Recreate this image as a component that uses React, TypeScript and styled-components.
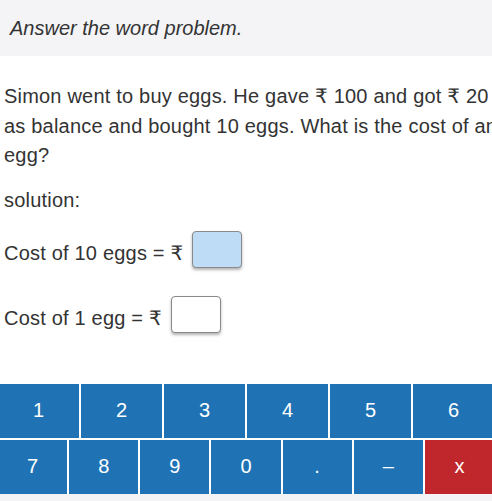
import React from "react";
import styled, { createGlobalStyle } from "styled-components";

const Global = createGlobalStyle`
  html, body { margin: 0; padding: 0; background: #fff; overflow: hidden; }
  body { font-family: "Liberation Sans", Arial, "DejaVu Sans", sans-serif; color: #333; }
`;

const Page = styled.div`
  width: 492px;
  height: 501px;
  overflow: hidden;
  display: flex;
  flex-direction: column;
`;

const Header = styled.div`
  height: 56px;
  flex: none;
  display: flex;
  align-items: center;
  padding-left: 10px;
  background: #f4f4f6;
  font-size: 20px;
  font-style: italic;
  color: #333;
`;

const Body = styled.div`
  width: 510px;
  flex: none;
  padding-left: 4px;
  font-size: 20px;
  line-height: 29.5px;
  letter-spacing: 0.2px;
  color: #333;
`;

const Question = styled.p`
  margin: 26px 0 0;
`;

const Label = styled.p`
  margin: 15.5px 0 0;
`;

const Row = styled.div<{ $top: number }>`
  display: flex;
  align-items: center;
  margin-top: ${(p) => p.$top}px;
  height: 37px;
`;

const RowText = styled.span`
  padding-top: 9px;
`;

const Box = styled.div<{ $active?: boolean }>`
  width: 48px;
  height: 35px;
  margin-left: 9px;
  border: 1px solid #8a8a8a;
  border-radius: 4px;
  background: ${(p) => (p.$active ? "#bedcf6" : "#fff")};
  box-shadow: 0 2px 3px rgba(0, 0, 0, 0.3);
`;

const Keypad = styled.div`
  margin-top: 51px;
  margin-left: -2px;
  width: 496px;
  display: flex;
  flex-direction: column;
  gap: 2px;
`;

const KeyRow = styled.div`
  display: flex;
  gap: 2px;
  height: 54px;
`;

const Key = styled.div<{ $danger?: boolean }>`
  flex: 1;
  display: flex;
  align-items: center;
  justify-content: center;
  background: ${(p) => (p.$danger ? "#c0272d" : "#1f73b5")};
  color: #fff;
  font-size: 20px;
`;

const Footer = styled.div`
  flex: 1;
  background: #f4f4f6;
`;

export default function App() {
  const row1 = ["1", "2", "3", "4", "5", "6"];
  const row2 = ["7", "8", "9", "0", ".", "\u2013"];
  return (
    <Page>
      <Global />
      <Header>Answer the word problem.</Header>
      <Body>
        <Question>
          Simon went to buy eggs. He gave ₹ 100 and got ₹ 20 as balance and bought 10 eggs. What is the cost of an egg?
        </Question>
        <Label>solution:</Label>
        <Row $top={15}>
          <RowText>Cost of 10 eggs = ₹</RowText>
          <Box $active />
        </Row>
        <Row $top={28}>
          <RowText>Cost of 1 egg = ₹</RowText>
          <Box />
        </Row>
      </Body>
      <Keypad>
        <KeyRow>
          {row1.map((k) => (
            <Key key={k}>{k}</Key>
          ))}
        </KeyRow>
        <KeyRow>
          {row2.map((k) => (
            <Key key={k}>{k}</Key>
          ))}
          <Key $danger>x</Key>
        </KeyRow>
      </Keypad>
      <Footer />
    </Page>
  );
}
